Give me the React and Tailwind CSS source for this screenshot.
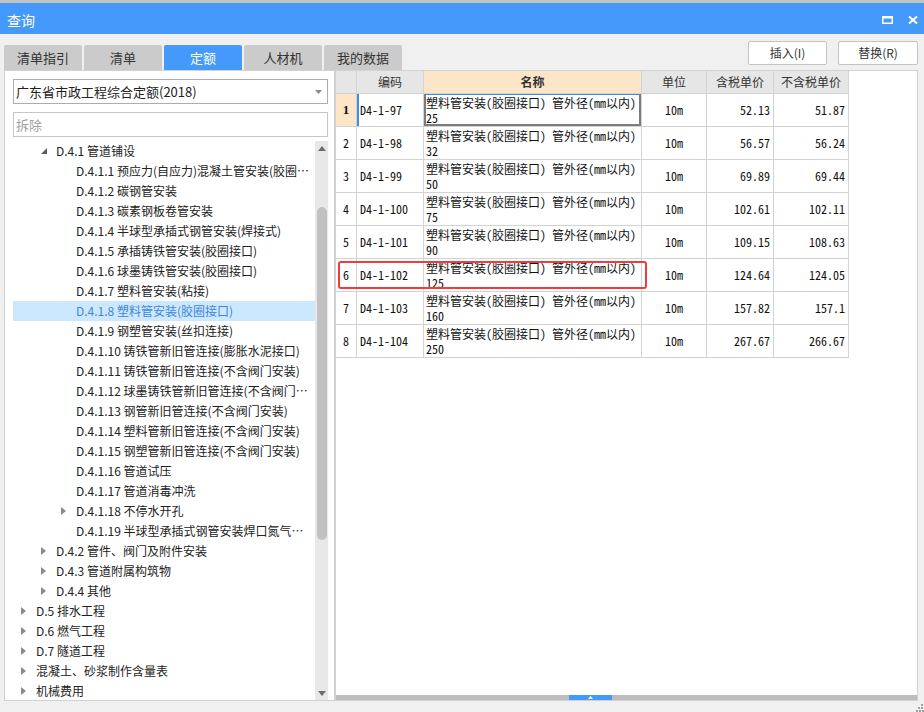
import React from 'react';

const UI = { fontFamily: '"Noto Sans CJK SC", "Noto Sans", sans-serif' };
const MONO = { fontFamily: '"Noto Sans Mono CJK SC", "Noto Sans CJK SC", "Liberation Mono", monospace' };

const tree = [
  [1, 'D.4.1 管道铺设', 'open'],
  [2, 'D.4.1.1 预应力(自应力)混凝土管安装(胶圈接口)'],
  [2, 'D.4.1.2 碳钢管安装'],
  [2, 'D.4.1.3 碳素钢板卷管安装'],
  [2, 'D.4.1.4 半球型承插式钢管安装(焊接式)'],
  [2, 'D.4.1.5 承插铸铁管安装(胶圈接口)'],
  [2, 'D.4.1.6 球墨铸铁管安装(胶圈接口)'],
  [2, 'D.4.1.7 塑料管安装(粘接)'],
  [2, 'D.4.1.8 塑料管安装(胶圈接口)', null, true],
  [2, 'D.4.1.9 钢塑管安装(丝扣连接)'],
  [2, 'D.4.1.10 铸铁管新旧管连接(膨胀水泥接口)'],
  [2, 'D.4.1.11 铸铁管新旧管连接(不含阀门安装)'],
  [2, 'D.4.1.12 球墨铸铁管新旧管连接(不含阀门安装)'],
  [2, 'D.4.1.13 钢管新旧管连接(不含阀门安装)'],
  [2, 'D.4.1.14 塑料管新旧管连接(不含阀门安装)'],
  [2, 'D.4.1.15 钢塑管新旧管连接(不含阀门安装)'],
  [2, 'D.4.1.16 管道试压'],
  [2, 'D.4.1.17 管道消毒冲洗'],
  [2, 'D.4.1.18 不停水开孔', 'closed'],
  [2, 'D.4.1.19 半球型承插式钢管安装焊口氮气保护'],
  [1, 'D.4.2 管件、阀门及附件安装', 'closed'],
  [1, 'D.4.3 管道附属构筑物', 'closed'],
  [1, 'D.4.4 其他', 'closed'],
  [0, 'D.5 排水工程', 'closed'],
  [0, 'D.6 燃气工程', 'closed'],
  [0, 'D.7 隧道工程', 'closed'],
  [0, '混凝土、砂浆制作含量表', 'closed'],
  [0, '机械费用', 'closed'],
];

const rows = [
  ['1', 'D4-1-97', '25', '52.13', '51.87'],
  ['2', 'D4-1-98', '32', '56.57', '56.24'],
  ['3', 'D4-1-99', '50', '69.89', '69.44'],
  ['4', 'D4-1-100', '75', '102.61', '102.11'],
  ['5', 'D4-1-101', '90', '109.15', '108.63'],
  ['6', 'D4-1-102', '125', '124.64', '124.05'],
  ['7', 'D4-1-103', '160', '157.82', '157.1'],
  ['8', 'D4-1-104', '250', '267.67', '266.67'],
];

function Arrow({ kind }) {
  if (kind === 'open')
    return (
      <svg width="6" height="6" viewBox="0 0 6 6">
        <path d="M6 0 L6 6 L0 6 Z" fill="#5a5a5a" />
      </svg>
    );
  if (kind === 'closed')
    return (
      <svg width="5" height="8" viewBox="0 0 5 8">
        <path d="M0 0 L5 4 L0 8 Z" fill="#8a8a8a" />
      </svg>
    );
  return null;
}

function TreeRow({ level, text, kind, selected }) {
  const pad = ['pl-[8px]', 'pl-[28px]', 'pl-[48px]'][level];
  return (
    <div
      className={`h-[20px] shrink-0 flex items-center ${pad} pr-[5px] ${selected ? 'bg-[#cce8ff] text-[#3d86dc]' : 'text-[#222]'}`}
    >
      <div className="w-[15px] shrink-0 flex items-center">
        <Arrow kind={kind} />
      </div>
      <div className="truncate text-[12px] leading-[20px]">{text}</div>
    </div>
  );
}

export default function App() {
  return (
    <div className="w-[924px] h-[712px] bg-[#f0f0f0] flex flex-col overflow-hidden" style={UI}>
      <div className="h-[3px] bg-[#c2c2c2]" />
      {/* Title bar */}
      <div className="h-[31px] bg-[#4499fb] flex items-center justify-between pl-[7px] pr-[6px]">
        <span className="text-white text-[14px] leading-none pt-[2px]">查询</span>
        <div className="flex items-center gap-[15px] pt-[2px]">
          <svg width="11" height="8" viewBox="0 0 11 8">
            <rect x="0.75" y="1" width="9.5" height="6.25" fill="none" stroke="white" strokeWidth="1.5" />
            <rect x="0" y="0" width="11" height="2.5" fill="white" />
          </svg>
          <svg width="10" height="8" viewBox="0 0 10 8">
            <path d="M1 0.5 L9 7.5 M9 0.5 L1 7.5" stroke="white" strokeWidth="2" />
          </svg>
        </div>
      </div>
      {/* Tabs + buttons */}
      <div className="h-[36px] flex justify-between pl-[4px] pr-[6px]">
        <div className="flex items-end gap-[2px]">
          {['清单指引', '清单', '定额', '人材机', '我的数据'].map((t, i) => (
            <div
              key={t}
              className={`w-[78px] h-[25px] rounded-t-[2px] flex items-center justify-center text-[13px] ${i === 2 ? 'bg-[#4499fb] text-white' : 'bg-[#cbcbcb] text-[#333]'}`}
            >
              {t}
            </div>
          ))}
        </div>
        <div className="flex gap-[11px] pt-[7px]">
          <div className="w-[79px] h-[24px] bg-white border border-[#c3c3c3] rounded-[2px] flex items-center justify-center text-[12px] text-[#333]">
            插入(I)
          </div>
          <div className="w-[80px] h-[24px] bg-white border border-[#c3c3c3] rounded-[2px] flex items-center justify-center text-[12px] text-[#333]">
            替换(R)
          </div>
        </div>
      </div>
      {/* Panels */}
      <div className="h-[631px] flex pl-[4px] pr-[6px]">
        {/* Left panel */}
        <div className="w-[331px] bg-white border border-[#d2d2d2] flex flex-col pl-[8px] pt-[8px]">
          <div className="w-[315px] h-[25px] shrink-0 border border-[#adadad] flex items-center justify-between pl-[2px] pr-[5px]">
            <span className="text-[13px] text-[#222]">广东省市政工程综合定额(2018)</span>
            <svg width="7" height="4" viewBox="0 0 7 4">
              <path d="M0 0 L7 0 L3.5 4 Z" fill="#8a8a8a" />
            </svg>
          </div>
          <div className="w-[315px] h-[25px] shrink-0 mt-[8px] border border-[#c6c6c6] flex items-center pl-[2px]">
            <span className="text-[13px] text-[#a0a0a0]">拆除</span>
          </div>
          <div className="flex-1 mt-[4px] flex min-h-0">
            <div className="w-[302px] flex flex-col overflow-hidden">
              {tree.map(([lv, t, k, s], i) => (
                <TreeRow key={i} level={lv} text={t} kind={k} selected={s} />
              ))}
            </div>
            <div className="w-[13px] bg-[#e8e8e8] flex flex-col items-center">
              <div className="h-[14px] flex items-center justify-center">
                <svg width="8" height="5" viewBox="0 0 8 5">
                  <path d="M0 5 L4 0 L8 5 Z" fill="#6d6d6d" />
                </svg>
              </div>
              <div className="h-[52px]" />
              <div className="w-[10px] h-[333px] rounded-[5px] bg-[#c1c1c1]" />
              <div className="flex-1" />
              <div className="h-[14px] flex items-center justify-center">
                <svg width="8" height="5" viewBox="0 0 8 5">
                  <path d="M0 0 L8 0 L4 5 Z" fill="#6d6d6d" />
                </svg>
              </div>
            </div>
          </div>
        </div>
        {/* Right panel */}
        <div className="relative flex-1 bg-white border border-[#d2d2d2] flex flex-col">
          <div className="flex-1 flex flex-col min-h-0 overflow-hidden">
            {/* header */}
            <div className="flex h-[23px] shrink-0 text-[12px] text-[#333]">
              <div className="w-[21px] bg-[#e6e6e6] border-r border-b border-[#d3d3d3]" />
              <div className="w-[67px] bg-[#e6e6e6] border-r border-b border-[#d3d3d3] flex items-center justify-center">编码</div>
              <div className="w-[218px] bg-[#fde5c8] border-r border-b border-[#d3d3d3] flex items-center justify-center font-bold">名称</div>
              <div className="w-[65px] bg-[#e6e6e6] border-r border-b border-[#d3d3d3] flex items-center justify-center">单位</div>
              <div className="w-[67px] bg-[#e6e6e6] border-r border-b border-[#d3d3d3] flex items-center justify-center">含税单价</div>
              <div className="w-[75px] bg-[#e6e6e6] border-r border-b border-[#d3d3d3] flex items-center justify-center">不含税单价</div>
            </div>
            {rows.map((r, i) => {
              const first = i === 0;
              return (
                <div key={r[0]} className="flex h-[33px] shrink-0 text-[12px] text-[#111]" style={MONO}>
                  <div
                    className={`w-[21px] border-r border-b border-[#d3d3d3] flex items-center justify-center ${first ? 'bg-[#fde5c8] font-bold' : ''}`}
                    style={first ? { fontFamily: '"Liberation Serif", serif', fontSize: '13px' } : undefined}
                  >
                    {r[0]}
                  </div>
                  <div
                    className={`w-[67px] border-r border-b border-[#d3d3d3] flex items-center pl-[3px] ${first ? 'shadow-[inset_2px_0_0_#3a8ee8]' : ''}`}
                  >
                    {r[1]}
                  </div>
                  <div
                    className={`w-[218px] border-r border-b border-[#d3d3d3] pl-[2px] pt-[1px] leading-[15px] whitespace-nowrap ${first ? 'shadow-[inset_2px_0_0_#7c7c7c,inset_-2px_0_0_#7c7c7c,inset_0_-2px_0_#7c7c7c,inset_0_1px_0_#3a8ee8]' : ''}`}
                  >
                    <div>塑料管安装(胶圈接口) 管外径(mm以内)</div>
                    <div>{r[2]}</div>
                  </div>
                  <div className="w-[65px] border-r border-b border-[#d3d3d3] flex items-center justify-center">10m</div>
                  <div className="w-[67px] border-r border-b border-[#d3d3d3] flex items-center justify-end pr-[3px]">{r[3]}</div>
                  <div className="w-[75px] border-r border-b border-[#d3d3d3] flex items-center justify-end pr-[3px]">{r[4]}</div>
                </div>
              );
            })}
          </div>
          {/* horizontal scrollbar */}
          <div className="h-[5px] flex shrink-0">
            <div className="w-[233px] bg-[#bdbdbd]" />
            <div className="w-[43px] bg-[#4499fb] flex items-center justify-center">
              <svg width="5" height="3" viewBox="0 0 5 3">
                <path d="M0 3 L2.5 0 L5 3 Z" fill="white" />
              </svg>
            </div>
            <div className="flex-1 bg-[#bdbdbd]" />
          </div>
          {/* red highlight */}
          <div className="absolute left-[2px] top-[190px] w-[309px] h-[28px] border-2 border-[#f23b3b] rounded-[3px]" />
        </div>
      </div>
      {/* bottom */}
      <div className="h-[11px] flex justify-end items-end pr-[0px] pb-[0px]">
        <svg width="8" height="8" viewBox="0 0 8 8">
          <rect x="5" y="0" width="2" height="2" fill="#a0a0a0" />
          <rect x="2" y="3" width="2" height="2" fill="#a0a0a0" />
          <rect x="5" y="3" width="2" height="2" fill="#a0a0a0" />
          <rect x="0" y="6" width="2" height="2" fill="#a0a0a0" />
          <rect x="3" y="6" width="2" height="2" fill="#a0a0a0" />
          <rect x="6" y="6" width="2" height="2" fill="#a0a0a0" />
        </svg>
      </div>
    </div>
  );
}
